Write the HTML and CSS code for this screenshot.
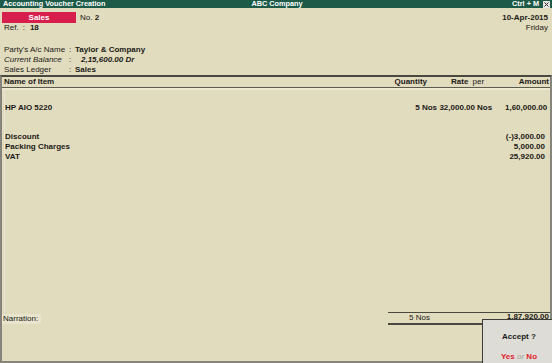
FILE: index.html
```html
<!DOCTYPE html>
<html lang="en">
<head>
    <meta charset="UTF-8">
    <title>Accounting Voucher Creation</title>
    <link rel="stylesheet" href="styles.css">
</head>
<body>
    <div class="screen">
        <!-- Title bar -->
        <div class="titlebar">
            <span class="tb-left">Accounting Voucher Creation</span>
            <span class="tb-center">ABC Company</span>
            <span class="tb-right">Ctrl + M
                <svg class="close" width="7" height="7" viewBox="0 0 7 7">
                    <rect x="0" y="0" width="7" height="7" fill="#e6e6e2"/>
                    <path d="M1.5 1.5 L5.5 5.5 M5.5 1.5 L1.5 5.5" stroke="#333" stroke-width="1"/>
                </svg>
            </span>
        </div>

        <!-- Voucher head -->
        <div class="head">
            <div class="head-row">
                <span class="vtype">Sales</span>
                <span class="vno">No. <b>2</b></span>
                <span class="vdate">10-Apr-2015</span>
            </div>
            <div class="head-row">
                <span class="ref">Ref.<span class="ref-colon">:</span><b>18</b></span>
                <span class="vday">Friday</span>
            </div>
        </div>

        <div class="party">
            <div class="party-row">
                <span class="lbl">Party's A/c Name</span><span class="colon">:</span>
                <b>Taylor &amp; Company</b>
            </div>
            <div class="party-row">
                <span class="lbl"><i>Current Balance</i></span><span class="colon">:</span>
                <b class="balance"><i>2,15,600.00 Dr</i></b>
            </div>
            <div class="party-row">
                <span class="lbl">Sales Ledger</span><span class="colon">:</span>
                <b>Sales</b>
            </div>
        </div>

        <!-- Item table -->
        <div class="frame">
            <div class="row hd">
                <span class="name">Name of Item</span>
                <span class="qty">Quantity</span>
                <span class="rate-per">Rate <span class="per-lbl">per</span></span>
                <span class="amt">Amount</span>
            </div>

            <div class="items">
                <div class="row item">
                    <span class="name">HP AIO 5220</span>
                    <span class="qty">5 Nos</span>
                    <span class="rate">32,000.00</span>
                    <span class="per">Nos</span>
                    <span class="amt">1,60,000.00</span>
                </div>

                <div class="ledgers">
                    <div class="row item">
                        <span class="name">Discount</span>
                        <span class="amt">(-)3,000.00</span>
                    </div>
                    <div class="row item">
                        <span class="name">Packing Charges</span>
                        <span class="amt">5,000.00</span>
                    </div>
                    <div class="row item">
                        <span class="name">VAT</span>
                        <span class="amt">25,920.00</span>
                    </div>
                </div>
            </div>

            <div class="footer">
                <div class="narration"><span class="narr-lbl">Narration:</span></div>
                <div class="totals">
                    <span class="tot-qty">5 Nos</span>
                    <span class="tot-amt">1,87,920.00</span>
                </div>
            </div>
        </div>

        <!-- Accept prompt -->
        <div class="accept">
            <div class="accept-q">Accept ?</div>
            <div class="accept-a"><b>Yes</b> <span class="or">or</span> <b>No</b></div>
        </div>
    </div>
</body>
</html>
```

FILE: styles.css
```css
:root {
    --bg: #e2dcbf;
    --title-bg: #1d5a48;
    --red: #d61f4c;
    --text: #1a1a16;
    --frame: #86857b;
    --rule: #4a4940;
}

body {
    margin: 0;
    font-family: 'Liberation Sans', Arial, sans-serif;
    font-size: 8px;
    color: var(--text);
    background: var(--bg);
}

.screen {
    position: relative;
    width: 552px;
    height: 363px;
    display: flex;
    flex-direction: column;
    overflow: hidden;
    background: var(--bg);
}

/* Title bar */
.titlebar {
    height: 8px;
    line-height: 8px;
    background: var(--title-bg);
    color: #ffffff;
    font-size: 7.3px;
    font-weight: bold;
    display: flex;
    padding: 0 1px 0 3px;
}

.tb-left,
.tb-right {
    flex: 1;
}

.tb-right {
    display: flex;
    justify-content: flex-end;
    align-items: center;
    gap: 4px;
}

.close {
    display: block;
    margin-right: 1px;
}

/* Voucher head */
.head {
    padding: 4px 4px 0 2px;
}

.head-row {
    display: flex;
    align-items: center;
    height: 10px;
    line-height: 10px;
}

.head-row:first-child {
    height: 11px;
    line-height: 11px;
}

.vtype {
    width: 74px;
    height: 11px;
    background: var(--red);
    color: #ffffff;
    font-weight: bold;
    text-align: center;
}

.vno {
    margin-left: 4px;
}

.vdate {
    margin-left: auto;
    font-weight: bold;
}

.ref {
    padding-left: 2px;
}

.ref-colon {
    margin: 0 5px 0 4px;
}

.vday {
    margin-left: auto;
}

.party {
    margin-top: 12px;
    padding-left: 4px;
}

.party-row {
    display: flex;
    height: 10px;
    line-height: 10px;
}

.lbl {
    width: 65px;
}

.colon {
    width: 6px;
}

.balance {
    padding-left: 6px;
}

/* Item table */
.frame {
    flex: 1;
    display: flex;
    flex-direction: column;
    border-top: 2px solid var(--rule);
    border-left: 2px solid var(--frame);
    border-right: 2px solid var(--frame);
    border-bottom: 2px solid var(--frame);
}

.row {
    display: grid;
    grid-template-columns: 1fr 48px 37px 30px 45px;
    height: 10px;
    line-height: 10px;
    font-weight: bold;
    white-space: nowrap;
}

.name {
    padding-left: 2px;
}

.qty,
.rate,
.amt {
    text-align: right;
}

.hd {
    border-bottom: 1px solid #5c5b50;
    box-shadow: 0 2px 0 #eee9d3;
}

.hd .qty {
    padding-right: 11px;
}

.hd .rate-per {
    grid-column: span 2;
    padding-left: 13px;
}

.per-lbl {
    font-weight: normal;
    margin-left: 2px;
}

.hd .amt {
    padding-right: 1px;
}

.item .qty {
    padding-right: 1px;
}

.item .per {
    padding-left: 2px;
}

.item .amt {
    grid-column: 5;
    padding-right: 5px;
}

.items {
    flex: 1;
    padding-top: 15px;
    margin-left: 2px;
    border-left: 1px solid #ebe6d1;
}

.items .name {
    padding-left: 0;
}

.ledgers {
    margin-top: 19px;
}

.footer {
    display: flex;
    align-items: center;
    margin-bottom: 36px;
}

.narration {
    flex: 1;
    line-height: 10px;
}

.narr-lbl {
    display: inline-block;
    padding: 0 3px 0 1px;
    background: #e9e4cd;
}

.totals {
    width: 162px;
    height: 10px;
    line-height: 10px;
    display: flex;
    border-top: 1px solid var(--rule);
    border-bottom: 2px solid var(--rule);
}

.tot-qty {
    padding-left: 21px;
}

.tot-amt {
    margin-left: auto;
    margin-top: -1px;
    font-weight: bold;
    padding-right: 1px;
}

/* Accept prompt */
.accept {
    position: absolute;
    left: 482px;
    top: 319px;
    width: 72px;
    height: 50px;
    background: #dedcd6;
    border: 1px solid #3c3c38;
    text-align: center;
    font-size: 8px;
}

.accept-q {
    margin-top: 12px;
    font-weight: bold;
}

.accept-a {
    margin-top: 11px;
    color: #e3212b;
}

.accept-a .or {
    color: #a09f9a;
}
```
